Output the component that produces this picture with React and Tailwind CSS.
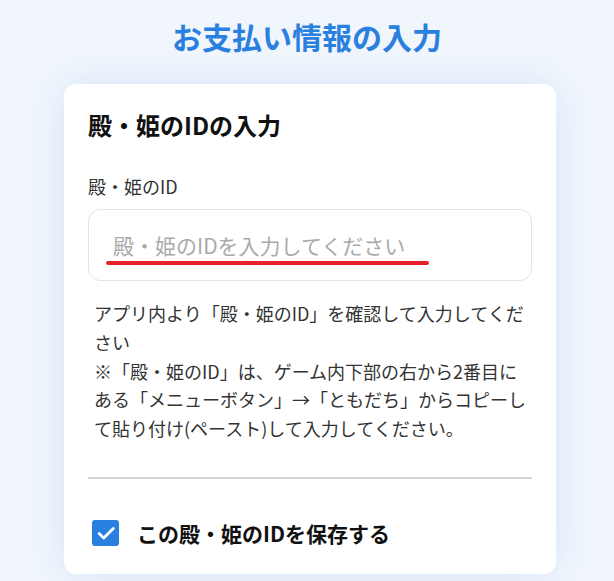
import React, { useState } from "react";

const App = () => {
  const [save, setSave] = useState(true);
  const [tonoId, setTonoId] = useState("");

  return (
    <div
      className="min-h-screen bg-[#f1f6fc] pt-[14px]"
      style={{ fontFamily: '"Noto Sans CJK JP", "Noto Sans", sans-serif' }}
    >
      <h1 className="text-center text-[30px] leading-[45px] font-bold text-[#2a80df]">
        お支払い情報の入力
      </h1>

      <div className="ml-[64px] w-[492px] mt-[25px] bg-white rounded-[12px] shadow-[0_0_40px_rgba(42,128,223,0.14)] px-6 pt-[23px] pb-[26px]">
        <h2 className="text-[24px] leading-[36px] font-bold text-[#111]">殿・姫のIDの入力</h2>

        <label className="block mt-[30px] text-[18px] leading-[27px] text-[#333]">殿・姫のID</label>

        <div className="relative mt-[9px]">
          <input
            type="text"
            value={tonoId}
            onChange={(e) => setTonoId(e.target.value)}
            placeholder="殿・姫のIDを入力してください"
            className="w-full h-[72px] rounded-[12px] border border-[#e4e4e4] px-6 text-[21px] text-[#333] placeholder:text-[#aaa] outline-none"
          />
          {/* red annotation line */}
          <div className="absolute left-[18px] top-[52px] w-[323px] h-[4px] rounded-full bg-[#e8202b]" />
        </div>

        <p className="mt-[18px] pl-[6px] text-[18px] leading-[28.8px] text-[#333]">
          アプリ内より「殿・姫のID」を確認して入力してください
          <br />
          ※「殿・姫のID」は、ゲーム内下部の右から2番目にある「メニューボタン」→「ともだち」からコピーして貼り付け(ペースト)して入力してください。
        </p>

        <hr className="mt-[34px] border-t-2 border-[#d4d4d4]" />

        <label className="flex items-center gap-[18px] mt-[39px] px-[4px] cursor-pointer">
          <span
            onClick={() => setSave(!save)}
            className={`w-[27px] h-[26px] rounded-[3px] flex items-center justify-center ${
              save ? "bg-[#2a80df]" : "border-2 border-[#999] bg-white"
            }`}
          >
            {save && (
              <svg width="22" height="22" viewBox="0 0 24 24" fill="none" stroke="white" strokeWidth="3" strokeLinecap="round" strokeLinejoin="round">
                <path d="M4.5 12.5l5 5L20 7" />
              </svg>
            )}
          </span>
          <span className="text-[21px] leading-[30px] font-bold text-[#111]">この殿・姫のIDを保存する</span>
        </label>
      </div>
    </div>
  );
};

export default App;
